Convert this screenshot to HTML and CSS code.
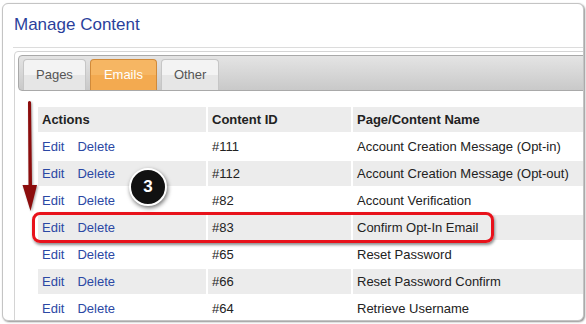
FILE: index.html
```html
<!DOCTYPE html>
<html lang="en">
<head>
  <meta charset="UTF-8" />
  <title>Manage Content</title>
  <link rel="stylesheet" href="styles.css">
</head>
<body>

  <div class="shot">
    <div class="window">
      <div class="page-head">
        <h1>Manage Content</h1>
      </div>

      <div class="panel">
        <ul class="tabs">
          <li class="tab">Pages</li>
          <li class="tab active">Emails</li>
          <li class="tab">Other</li>
        </ul>

        <table class="content-table">
          <thead>
            <tr>
              <th class="col-actions">Actions</th>
              <th class="col-id">Content ID</th>
              <th class="col-name">Page/Content Name</th>
            </tr>
          </thead>
          <tbody>
            <tr>
              <td><a href="#">Edit</a><a href="#">Delete</a></td>
              <td>#111</td>
              <td>Account Creation Message (Opt-in)</td>
            </tr>
            <tr>
              <td><a href="#">Edit</a><a href="#">Delete</a></td>
              <td>#112</td>
              <td>Account Creation Message (Opt-out)</td>
            </tr>
            <tr>
              <td><a href="#">Edit</a><a href="#">Delete</a></td>
              <td>#82</td>
              <td>Account Verification</td>
            </tr>
            <tr>
              <td><a href="#">Edit</a><a href="#">Delete</a></td>
              <td>#83</td>
              <td>Confirm Opt-In Email</td>
            </tr>
            <tr>
              <td><a href="#">Edit</a><a href="#">Delete</a></td>
              <td>#65</td>
              <td>Reset Password</td>
            </tr>
            <tr>
              <td><a href="#">Edit</a><a href="#">Delete</a></td>
              <td>#66</td>
              <td>Reset Password Confirm</td>
            </tr>
            <tr>
              <td><a href="#">Edit</a><a href="#">Delete</a></td>
              <td>#64</td>
              <td>Retrieve Username</td>
            </tr>
          </tbody>
        </table>
      </div>
    </div>

    <!-- annotation layer -->
    <svg class="arrow" width="586" height="324" viewBox="0 0 586 324">
      <path d="M28 102 Q29.5 100 31 102 L32 185 L37 185 L30.5 211 L22.5 185 L28.5 185 Z" fill="#8c0d0d"/>
    </svg>
    <div class="highlight"></div>
    <div class="callout">3</div>
  </div>

</body>
</html>
```

FILE: styles.css
```css
* {
  box-sizing: border-box;
  margin: 0;
  padding: 0;
}

body {
  background: #fff;
  font-family: 'Liberation Sans', Arial, sans-serif;
  font-size: 13px;
  color: #222;
}

.shot {
  position: relative;
  width: 586px;
  height: 324px;
  overflow: hidden;
}

.window {
  margin: 3px 2px 0 2px;
  height: 318px;
  border: 1px solid #c4c4c4;
  border-radius: 6px;
  background: #fff;
  overflow: hidden;
  box-shadow: 1px 1px 2px rgba(0, 0, 0, 0.45);
}

.page-head {
  margin-left: 10px;
  padding: 11px 0 12px 1px;
  border-bottom: 1px solid #dcdcdc;
}

.page-head h1 {
  font-size: 17px;
  line-height: 20px;
  font-weight: normal;
  color: #2b3f9c;
}

.panel {
  margin: 3px 0 0 11px;
  width: 620px;
  padding: 3px;
  border: 1px solid #d4d4d4;
  border-radius: 4px;
}

.tabs {
  list-style: none;
  display: flex;
  align-items: flex-end;
  gap: 4px;
  height: 36px;
  padding: 0 4px;
  border: 1px solid #a9a9a9;
  border-radius: 4px;
  background: linear-gradient(#e4e4e4, #c9c9c9);
}

.tab {
  height: 31px;
  padding: 0 12px;
  line-height: 30px;
  color: #555;
  border: 1px solid #c6c6c6;
  border-bottom: none;
  border-radius: 4px 4px 0 0;
  background: linear-gradient(#f3f3f3 50%, #e6e6e6 50%);
}

.tab.active {
  padding: 0 13px;
  color: #fff;
  border-color: #d08a3a;
  background: linear-gradient(#f6b663 50%, #f3aa50 50%);
}

.content-table {
  margin: 14px 0 0 18px;
  border-spacing: 2px;
}

.content-table th,
.content-table td {
  height: 25px;
  padding: 0 4px;
  text-align: left;
  vertical-align: middle;
  white-space: nowrap;
}

.content-table th {
  font-weight: bold;
  background: #ececec;
}

.content-table tbody tr:nth-child(even) td {
  background: #ececec;
}

.col-actions { width: 168px; }
.col-id { width: 143px; }
.col-name { width: 250px; }

.content-table a {
  color: #2b48a4;
  text-decoration: none;
}

.content-table a + a {
  margin-left: 13px;
}

/* annotations */
.arrow {
  position: absolute;
  left: 0;
  top: 0;
  pointer-events: none;
  filter: drop-shadow(1px 1px 1px rgba(0, 0, 0, 0.35));
}

.highlight {
  position: absolute;
  left: 32px;
  top: 212px;
  width: 462px;
  height: 31px;
  border: 3px solid #e8121b;
  border-radius: 8px;
  box-shadow: 1px 2px 3px rgba(0, 0, 0, 0.45);
}

.callout {
  position: absolute;
  left: 129px;
  top: 168px;
  width: 38px;
  height: 38px;
  border: 2px solid #fff;
  border-radius: 50%;
  background: #111;
  color: #fff;
  font-size: 17px;
  font-weight: bold;
  line-height: 34px;
  text-align: center;
  box-shadow: 1px 2px 4px rgba(0, 0, 0, 0.55);
}
```
